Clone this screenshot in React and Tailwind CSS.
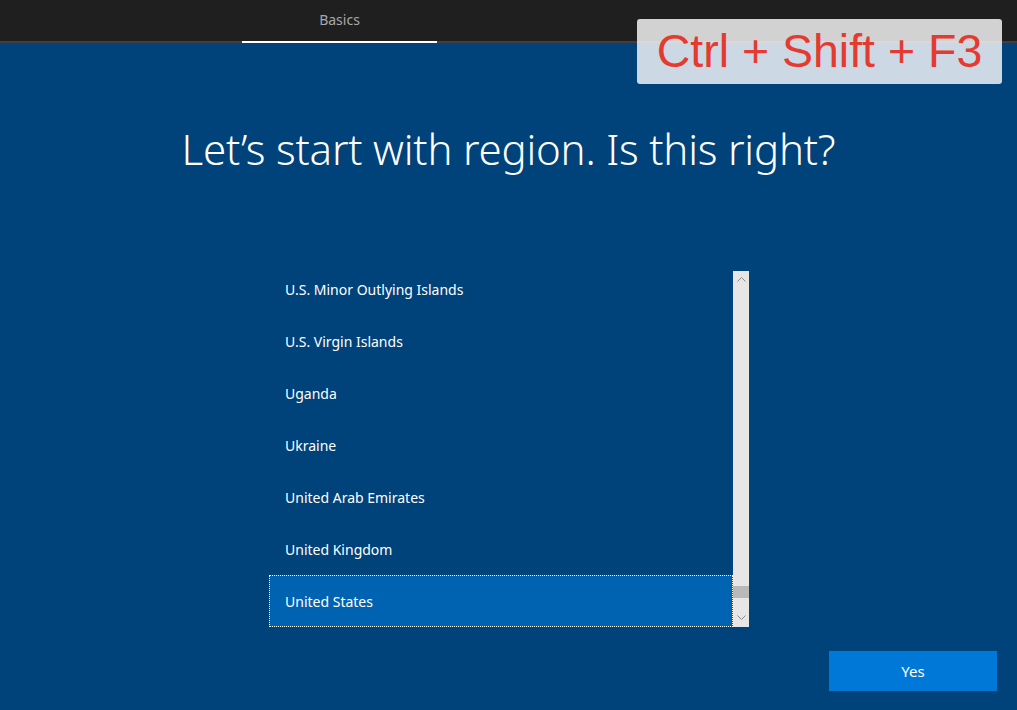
const regions = [
  'U.S. Minor Outlying Islands',
  'U.S. Virgin Islands',
  'Uganda',
  'Ukraine',
  'United Arab Emirates',
  'United Kingdom',
  'United States',
];

const Chevron = ({ up }) => (
  <svg width="9" height="5" viewBox="0 0 9 5" className="block">
    <path
      d={up ? 'M0.5 4.5 L4.5 0.5 L8.5 4.5' : 'M0.5 0.5 L4.5 4.5 L8.5 0.5'}
      fill="none"
      stroke="#8a8a8a"
      strokeWidth="1"
    />
  </svg>
);

export default function App() {
  const selected = 'United States';

  return (
    <div
      className="relative w-[1017px] h-[710px] overflow-hidden bg-[#00427a] text-white"
      style={{ fontFamily: '"Segoe UI", "Noto Sans", "Open Sans", sans-serif' }}
    >
      {/* top bar */}
      <div className="h-[41px] bg-[#1f1f1f] flex">
        <div className="w-[242px]" />
        <div className="w-[195px] flex items-center justify-center text-[14px] text-[#a8a8a8] pb-[3px]">
          Basics
        </div>
      </div>
      <div className="h-[2px] bg-[#3f3f3f] flex">
        <div className="ml-[242px] w-[195px] bg-white" />
      </div>

      <h1 className="mt-[78px] text-center text-[42px] font-light leading-[56px] tracking-[-0.2px]">
        Let’s start with region. Is this right?
      </h1>

      {/* list */}
      <div className="mt-[94px] ml-[269px] w-[480px] h-[356px] flex">
        <div className="flex-1 h-full overflow-hidden">
          <div className="-mt-[8px]">
            {regions.map((r) => (
              <div
                key={r}
                className={`h-[52px] flex items-center pl-[15px] text-[14px] border border-dotted ${
                  r === selected ? 'bg-[#0063b1] border-white' : 'border-transparent'
                }`}
              >
                {r}
              </div>
            ))}
          </div>
        </div>
        <div className="w-[16px] h-[356px] bg-[#e6e6e6] flex flex-col items-center">
          <div className="pt-[6px] h-[17px]">
            <Chevron up />
          </div>
          <div className="flex-1" />
          <div className="w-full h-[12px] bg-[#b9b9b9]" />
          <div className="h-[29px] pt-[17px]">
            <Chevron />
          </div>
        </div>
      </div>

      {/* yes button */}
      <div className="mt-[24px] flex justify-end pr-[20px]">
        <button className="w-[168px] h-[40px] bg-[#0078d7] text-[15px] text-white flex items-center justify-center">
          Yes
        </button>
      </div>

      {/* shortcut overlay */}
      <div className="absolute left-[637px] top-[19px] w-[365px] h-[65px] rounded-[3px] bg-white/80 flex items-center justify-center">
        <span
          className="text-[46.5px] text-[#e53a30] leading-none"
          style={{ fontFamily: '"Liberation Sans", Arial, sans-serif' }}
        >
          Ctrl + Shift + F3
        </span>
      </div>
    </div>
  );
}
